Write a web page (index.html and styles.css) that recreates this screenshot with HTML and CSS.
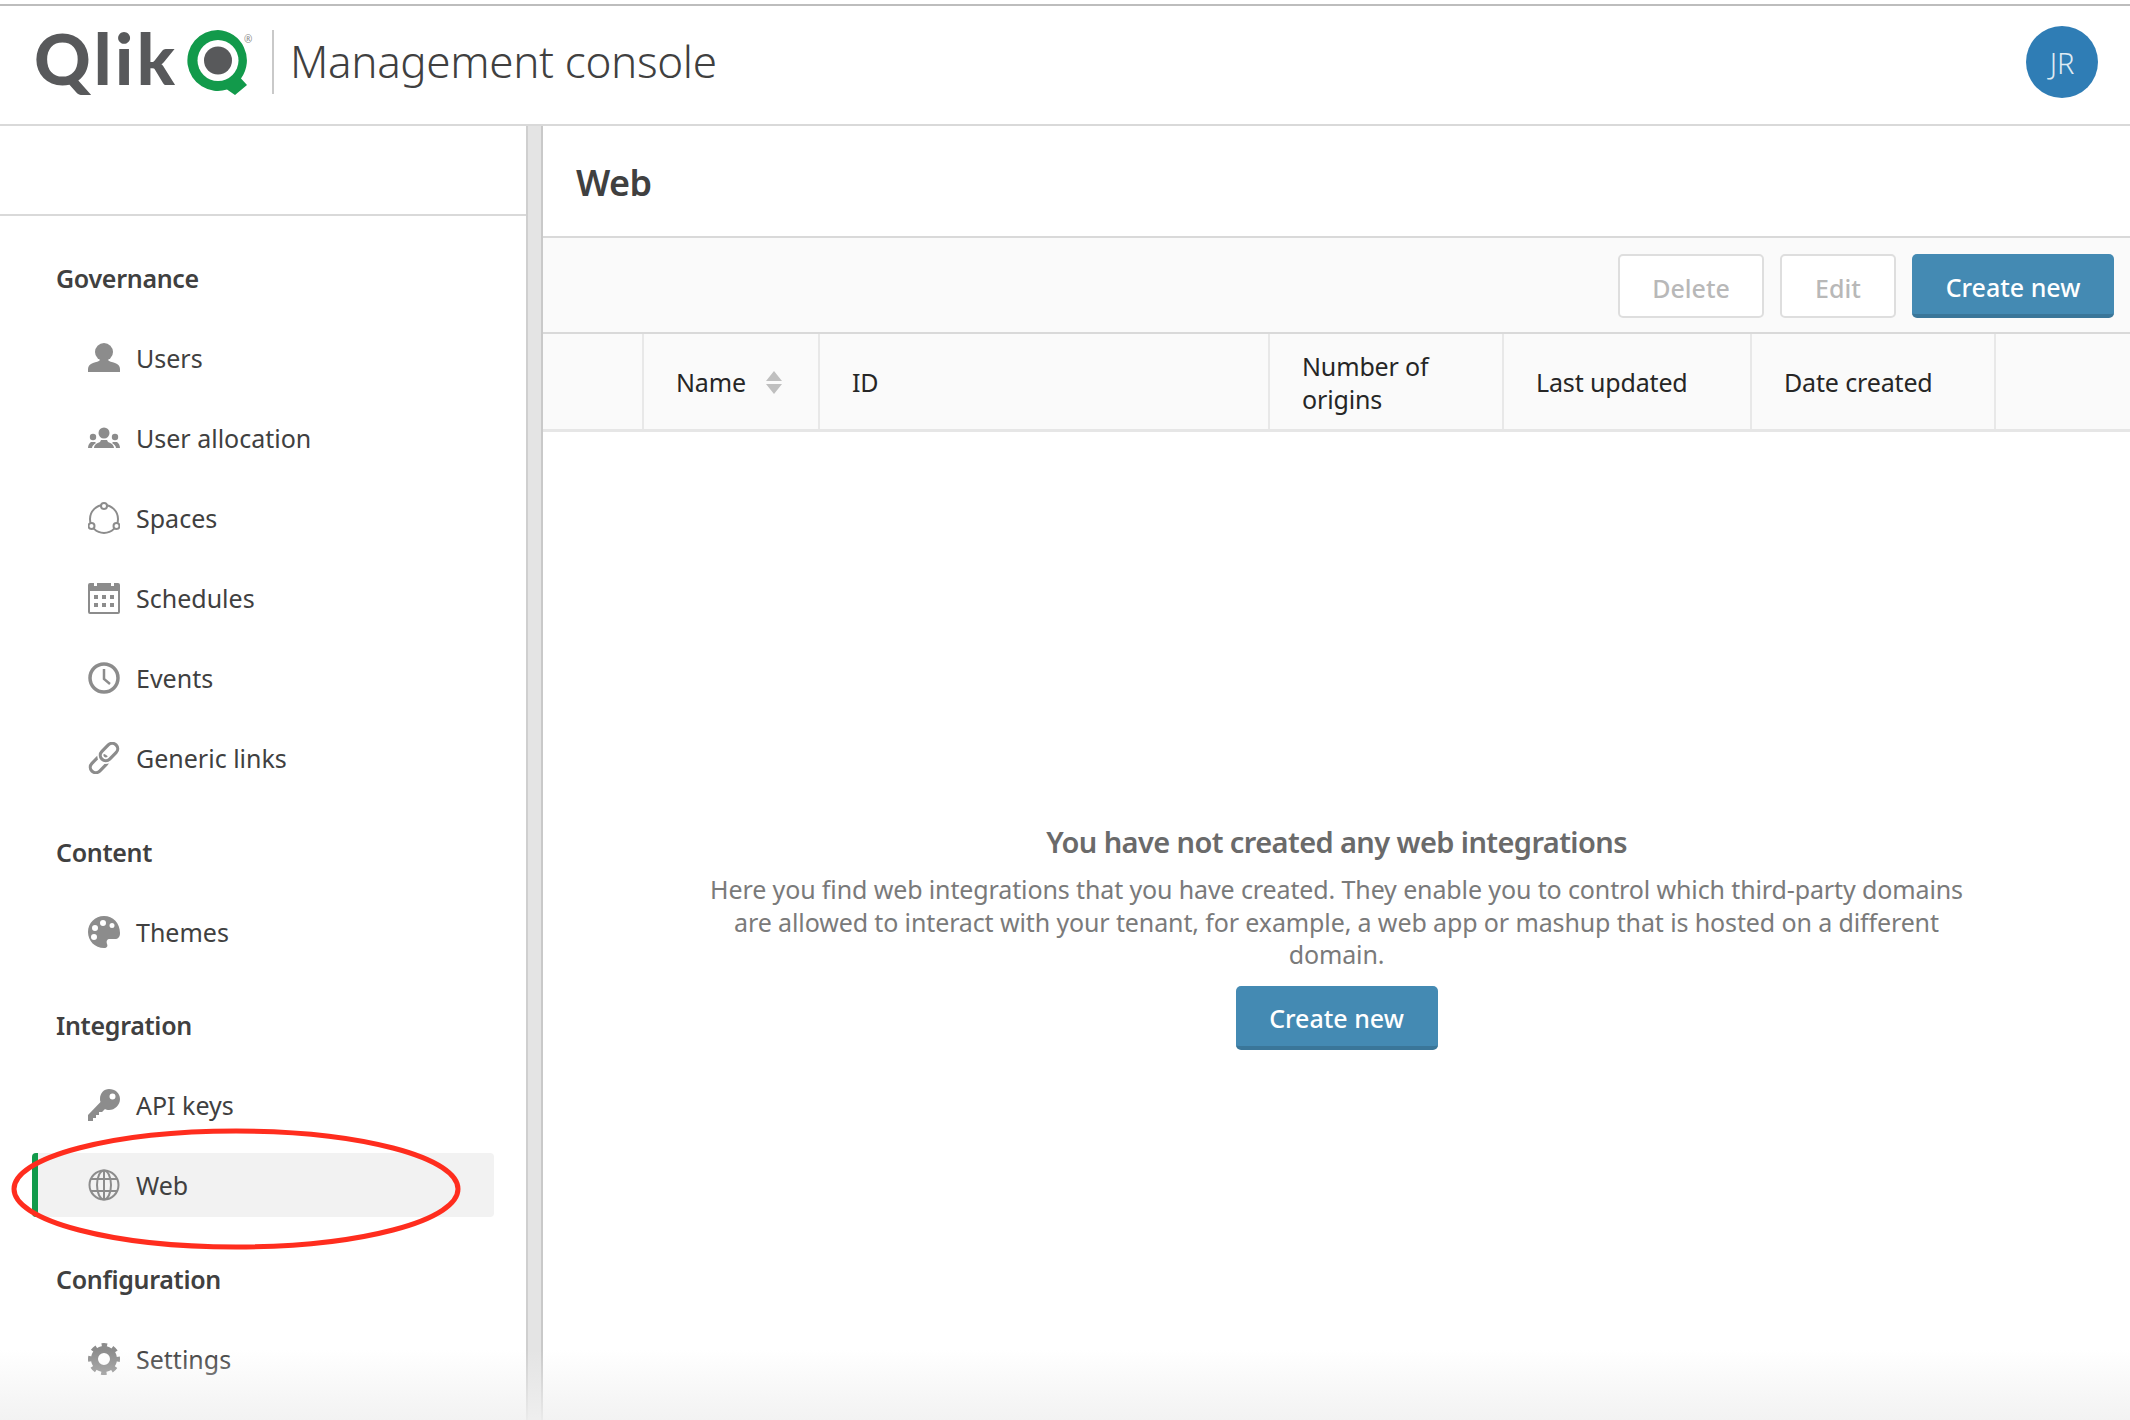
FILE: index.html
```html
<!DOCTYPE html>
<html lang="en">
<head>
    <meta charset="UTF-8">
    <meta name="viewport" content="width=device-width, initial-scale=1.0">
    <title>Qlik - Management console</title>
    <link rel="stylesheet" href="styles.css">
</head>
<body>
    <header class="topbar">
        <div class="logo">
            <span class="logo-word">Qlik</span>
            <svg class="logo-mark" viewBox="0 0 66 66" width="66" height="66">
                <path class="logo-green" d="M32 1a30.500 30.500 0 1 0 9 59.600l8 5.400 12-10-6-6.500A30.500 30.500 0 0 0 32 1z"/>
                <circle cx="32" cy="31.500" r="20.500" fill="#fff"/>
                <circle cx="32" cy="31.500" r="14" fill="#58595b"/>
            </svg>
            <span class="logo-reg">®</span>
        </div>
        <h1 class="app-title">Management console</h1>
        <div class="avatar">JR</div>
    </header>

    <div class="layout">
        <aside class="sidebar">
            <div class="sidebar-top"></div>
            <nav class="nav">
                <section class="nav-section">
                    <h2 class="nav-heading">Governance</h2>
                    <a class="nav-item">
                        <svg class="nav-icon" viewBox="0 0 32 32"><circle cx="16" cy="10" r="9"/><path d="M0 30v-3c0-3 2-5 5-6 3-1 6-1.500 7-3h8c1 1.500 4 2 7 3 3 1 5 3 5 6v3z"/></svg>
                        Users
                    </a>
                    <a class="nav-item">
                        <svg class="nav-icon" viewBox="0 0 32 32"><circle cx="16" cy="11" r="5.500"/><path d="M6 26c0-3 3-5 6-6l1-2h6l1 2c3 1 6 3 6 6z"/><circle cx="5" cy="15" r="3.200"/><path d="M0 26c0-3 1.500-5 3-6h4l1 1c-2 1-4 3-4 5z"/><circle cx="27" cy="15" r="3.200"/><path d="M32 26c0-3-1.500-5-3-6h-4l-1 1c2 1 4 3 4 5z"/></svg>
                        User allocation
                    </a>
                    <a class="nav-item">
                        <svg class="nav-icon nav-icon-line" viewBox="0 0 32 32"><circle cx="16" cy="17" r="14"/><circle class="spot" cx="16" cy="4" r="3"/><circle class="spot" cx="3.500" cy="24" r="3"/><circle class="spot" cx="28.500" cy="24" r="3"/></svg>
                        Spaces
                    </a>
                    <a class="nav-item">
                        <svg class="nav-icon" viewBox="0 0 32 32"><path fill-rule="evenodd" d="M2 1h4v3h3V1h14v3h3V1h4a2 2 0 0 1 2 2v27a2 2 0 0 1-2 2H2a2 2 0 0 1-2-2V3a2 2 0 0 1 2-2zm0 8v21h28V9z"/><rect x="6" y="13" width="4" height="4"/><rect x="14" y="13" width="4" height="4"/><rect x="22" y="13" width="4" height="4"/><rect x="6" y="21" width="4" height="4"/><rect x="14" y="21" width="4" height="4"/><rect x="22" y="21" width="4" height="4"/></svg>
                        Schedules
                    </a>
                    <a class="nav-item">
                        <svg class="nav-icon nav-icon-line nav-icon-thick" viewBox="0 0 32 32"><circle cx="16" cy="16" r="14"/><path class="hands" d="M16 7v10l6 5"/></svg>
                        Events
                    </a>
                    <a class="nav-item">
                        <svg class="nav-icon nav-icon-line nav-icon-link" viewBox="0 0 32 32"><rect x="1" y="16.500" width="20" height="11" rx="5.500" transform="rotate(-45 11 22)"/><rect class="halo" x="11" y="4.500" width="20" height="11" rx="5.500" transform="rotate(-45 21 10)"/><rect x="11" y="4.500" width="20" height="11" rx="5.500" transform="rotate(-45 21 10)"/></svg>
                        Generic links
                    </a>
                </section>

                <section class="nav-section">
                    <h2 class="nav-heading">Content</h2>
                    <a class="nav-item">
                        <svg class="nav-icon" viewBox="0 0 32 32"><path fill-rule="evenodd" d="M16 0C7 0 0 7 0 16s7 16 16 16c3 0 4-2 3-4-1-3 0-5 3-5h5c3 0 5-2 5-6C32 7 25 0 16 0zM7 9a3 3 0 1 1 0 6 3 3 0 0 1 0-6zm8-5a3 3 0 1 1 0 6 3 3 0 0 1 0-6zm9 3a2.500 2.500 0 1 1 0 5 2.500 2.500 0 0 1 0-5zM6 18a3 3 0 1 1 0 6 3 3 0 0 1 0-6z"/></svg>
                        Themes
                    </a>
                </section>

                <section class="nav-section">
                    <h2 class="nav-heading">Integration</h2>
                    <a class="nav-item">
                        <svg class="nav-icon" viewBox="0 0 32 32"><path fill-rule="evenodd" d="M21 0c6 0 11 4 11 10s-5 11-11 11c-1.500 0-3-.300-4-1l-3 3h-3v3H8v3H5v3H0v-6L12.500 13c-.500-1-.500-2-.500-3C12 4 16 0 21 0zm3.500 4.500a3 3 0 1 0 0 6 3 3 0 0 0 0-6z"/></svg>
                        API keys
                    </a>
                    <a class="nav-item is-active">
                        <svg class="nav-icon nav-icon-line" viewBox="0 0 32 32"><circle cx="16" cy="16" r="14.500"/><ellipse cx="16" cy="16" rx="7" ry="14.500"/><path d="M16 1.500v29M3 10h26M3 22h26"/></svg>
                        Web
                    </a>
                </section>

                <section class="nav-section">
                    <h2 class="nav-heading">Configuration</h2>
                    <a class="nav-item">
                        <svg class="nav-icon nav-icon-gear" viewBox="0 0 32 32"><circle class="gear-teeth" cx="16" cy="16" r="13.500"/><circle class="gear-ring" cx="16" cy="16" r="9.500"/></svg>
                        Settings
                    </a>
                </section>
            </nav>
        </aside>

        <div class="gutter"></div>

        <main class="main">
            <div class="page-title">Web</div>
            <div class="toolbar">
                <button class="btn btn-off btn-delete">Delete</button>
                <button class="btn btn-off btn-edit">Edit</button>
                <button class="btn btn-primary btn-create">Create new</button>
            </div>
            <div class="table-head">
                <div class="cell"></div>
                <div class="cell">Name
                    <svg class="sort" viewBox="0 0 16 23" width="16" height="23"><path d="M8 0l8 10H0zM8 23L0 13h16z"/></svg>
                </div>
                <div class="cell">ID</div>
                <div class="cell">Number of origins</div>
                <div class="cell">Last updated</div>
                <div class="cell">Date created</div>
                <div class="cell cell-last"></div>
            </div>
            <div class="empty">
                <div class="empty-title">You have not created any web integrations</div>
                <p class="empty-text">Here you find web integrations that you have created. They enable you to control which third-party domains are allowed to interact with your tenant, for example, a web app or mashup that is hosted on a different domain.</p>
                <button class="btn btn-primary btn-create">Create new</button>
            </div>
        </main>
    </div>

    <!-- annotation drawn over the screenshot -->
    <svg class="callout" viewBox="0 0 460 130" width="460" height="130"><ellipse cx="230" cy="65" rx="222" ry="58"/></svg>
    <div class="fade"></div>
</body>
</html>
```

FILE: styles.css
```css
* {
    box-sizing: border-box;
}

html, body {
    height: 100%;
}

body {
    margin: 0;
    height: 1420px;
    overflow: hidden;
    position: relative;
    display: flex;
    flex-direction: column;
    padding-top: 4px;
    background: #fff;
    color: #404040;
    font-family: "Noto Sans", Lato, sans-serif;
    font-size: 25px;
}

.topbar {
    display: flex;
    align-items: center;
    height: 122px;
    padding: 0 32px 6px 35px;
    border-top: 2px solid #bdbdbd;
    border-bottom: 2px solid #d9d9d9;
    flex-shrink: 0;
}

.logo {
    display: flex;
    align-items: center;
    position: relative;
    width: 239px;
    height: 64px;
    margin-right: 16px;
    border-right: 2px solid #c9c9c9;
}

.logo-word {
    margin-bottom: 8px;
    margin-left: -1px;
    font-family: Lato, sans-serif;
    font-size: 70px;
    font-weight: 900;
    line-height: 64px;
    color: #58595b;
    letter-spacing: 3.500px;
}

.logo-mark {
    position: absolute;
    left: 151px;
    top: -1px;
}

.logo-green {
    fill: #129a4b;
}

.logo-reg {
    position: absolute;
    left: 209px;
    top: 3px;
    font-size: 10px;
    line-height: 12px;
    color: #8a8a8a;
}

.app-title {
    margin: 0 0 2px;
    font-size: 44px;
    font-weight: 300;
    color: #404040;
    letter-spacing: -0.350px;
}

.avatar {
    width: 72px;
    height: 72px;
    margin-left: auto;
    border-radius: 50%;
    background: #2f7db5;
    color: #dfebf3;
    display: flex;
    align-items: center;
    justify-content: center;
    font-size: 29px;
    font-weight: 300;
}

.layout {
    display: flex;
    flex: 1;
    min-height: 0;
}

.sidebar {
    width: 528px;
    flex-shrink: 0;
    border-right: 2px solid #cfcfcf;
}

.sidebar-top {
    height: 90px;
    border-bottom: 2px solid #d9d9d9;
}

.nav {
    padding: 46px 32px 0;
    display: flex;
    flex-direction: column;
    gap: 45.500px;
}

.nav-section {
    display: flex;
    flex-direction: column;
    gap: 16px;
}

.nav-heading {
    margin: 0 0 16px 24px;
    font-size: 25px;
    line-height: 32px;
    font-weight: 600;
    color: #404040;
    letter-spacing: -0.300px;
}

.nav-item {
    display: flex;
    align-items: center;
    gap: 16px;
    height: 64px;
    padding-left: 56px;
    border-radius: 4px;
    font-size: 25px;
    color: #404040;
}

.nav-item.is-active {
    width: 462px;
    background: #f2f2f2;
    border-left: 6px solid #129a4b;
    padding-left: 50px;
}

.nav-icon {
    width: 32px;
    height: 32px;
    flex-shrink: 0;
    fill: #8c8c8c;
}

.nav-icon-line {
    fill: none;
    stroke: #8c8c8c;
    stroke-width: 2;
}

.nav-icon-thick {
    stroke-width: 3.500;
}

.nav-icon-link {
    stroke-width: 3.200;
}

.nav-icon-link .halo {
    stroke: #fff;
    stroke-width: 6.500;
}

.nav-icon .spot {
    fill: #fff;
}

.hands {
    stroke-width: 2.500;
}

.nav-icon-gear {
    fill: none;
    stroke: #8c8c8c;
}

.gear-teeth {
    stroke-width: 5;
    stroke-dasharray: 5.300 5.300;
    stroke-dashoffset: 2.650;
}

.gear-ring {
    stroke-width: 7;
}

.gutter {
    width: 15px;
    flex-shrink: 0;
    background: #e4e4e4;
    border-right: 2px solid #c9c9c9;
}

.main {
    flex: 1;
    min-width: 0;
    display: flex;
    flex-direction: column;
}

.page-title {
    height: 112px;
    padding: 2px 0 0 33px;
    display: flex;
    align-items: center;
    font-size: 36px;
    font-weight: 600;
    color: #404040;
    letter-spacing: -0.600px;
    border-bottom: 2px solid #d9d9d9;
}

.toolbar {
    height: 96px;
    display: flex;
    align-items: center;
    justify-content: flex-end;
    gap: 16px;
    padding: 2px 16px 0 0;
    background: #fafafa;
    border-bottom: 2px solid #d9d9d9;
}

.btn {
    height: 64px;
    padding: 3px 0 0;
    border-radius: 5px;
    font-family: inherit;
    font-size: 25px;
    font-weight: 500;
}

.btn-off {
    background: #fff;
    border: 2px solid #dedede;
    color: #b8b8b8;
}

.btn-delete {
    width: 146px;
}

.btn-edit {
    width: 116px;
}

.btn-primary {
    padding-top: 5px;
    background: #448ab3;
    border: none;
    border-bottom: 4px solid #3a7699;
    color: #fff;
}

.btn-create {
    width: 202px;
}

.table-head {
    height: 98px;
    display: grid;
    grid-template-columns: 101px 176px 450px 234px 248px 244px 1fr;
    background: #fafafa;
    border-bottom: 3px solid #e6e6e6;
    font-size: 25px;
    color: #262626;
    line-height: 33px;
    letter-spacing: -0.150px;
}

.cell {
    display: flex;
    align-items: center;
    gap: 20px;
    padding: 2px 32px 0;
    border-right: 2px solid #e8e8e8;
}

.cell-last {
    border-right: none;
}

.sort {
    fill: #bfbfbf;
    flex-shrink: 0;
}

.empty {
    display: flex;
    flex-direction: column;
    align-items: center;
    padding-top: 390px;
    text-align: center;
}

.empty-title {
    font-size: 29px;
    line-height: 40px;
    font-weight: 600;
    color: #6a6a6a;
    letter-spacing: -0.600px;
}

.empty-text {
    width: 1270px;
    margin: 11px 0 15px;
    font-size: 25px;
    line-height: 32.500px;
    color: #7a7a7a;
    letter-spacing: -0.120px;
}

.callout {
    position: absolute;
    left: 6px;
    top: 1124px;
    fill: none;
    stroke: #ff2d1e;
    stroke-width: 5;
}

.fade {
    position: absolute;
    left: 0;
    right: 0;
    bottom: 0;
    height: 70px;
    pointer-events: none;
    background: linear-gradient(rgba(240, 240, 240, 0), rgba(240, 240, 240, 0.85));
}
```
